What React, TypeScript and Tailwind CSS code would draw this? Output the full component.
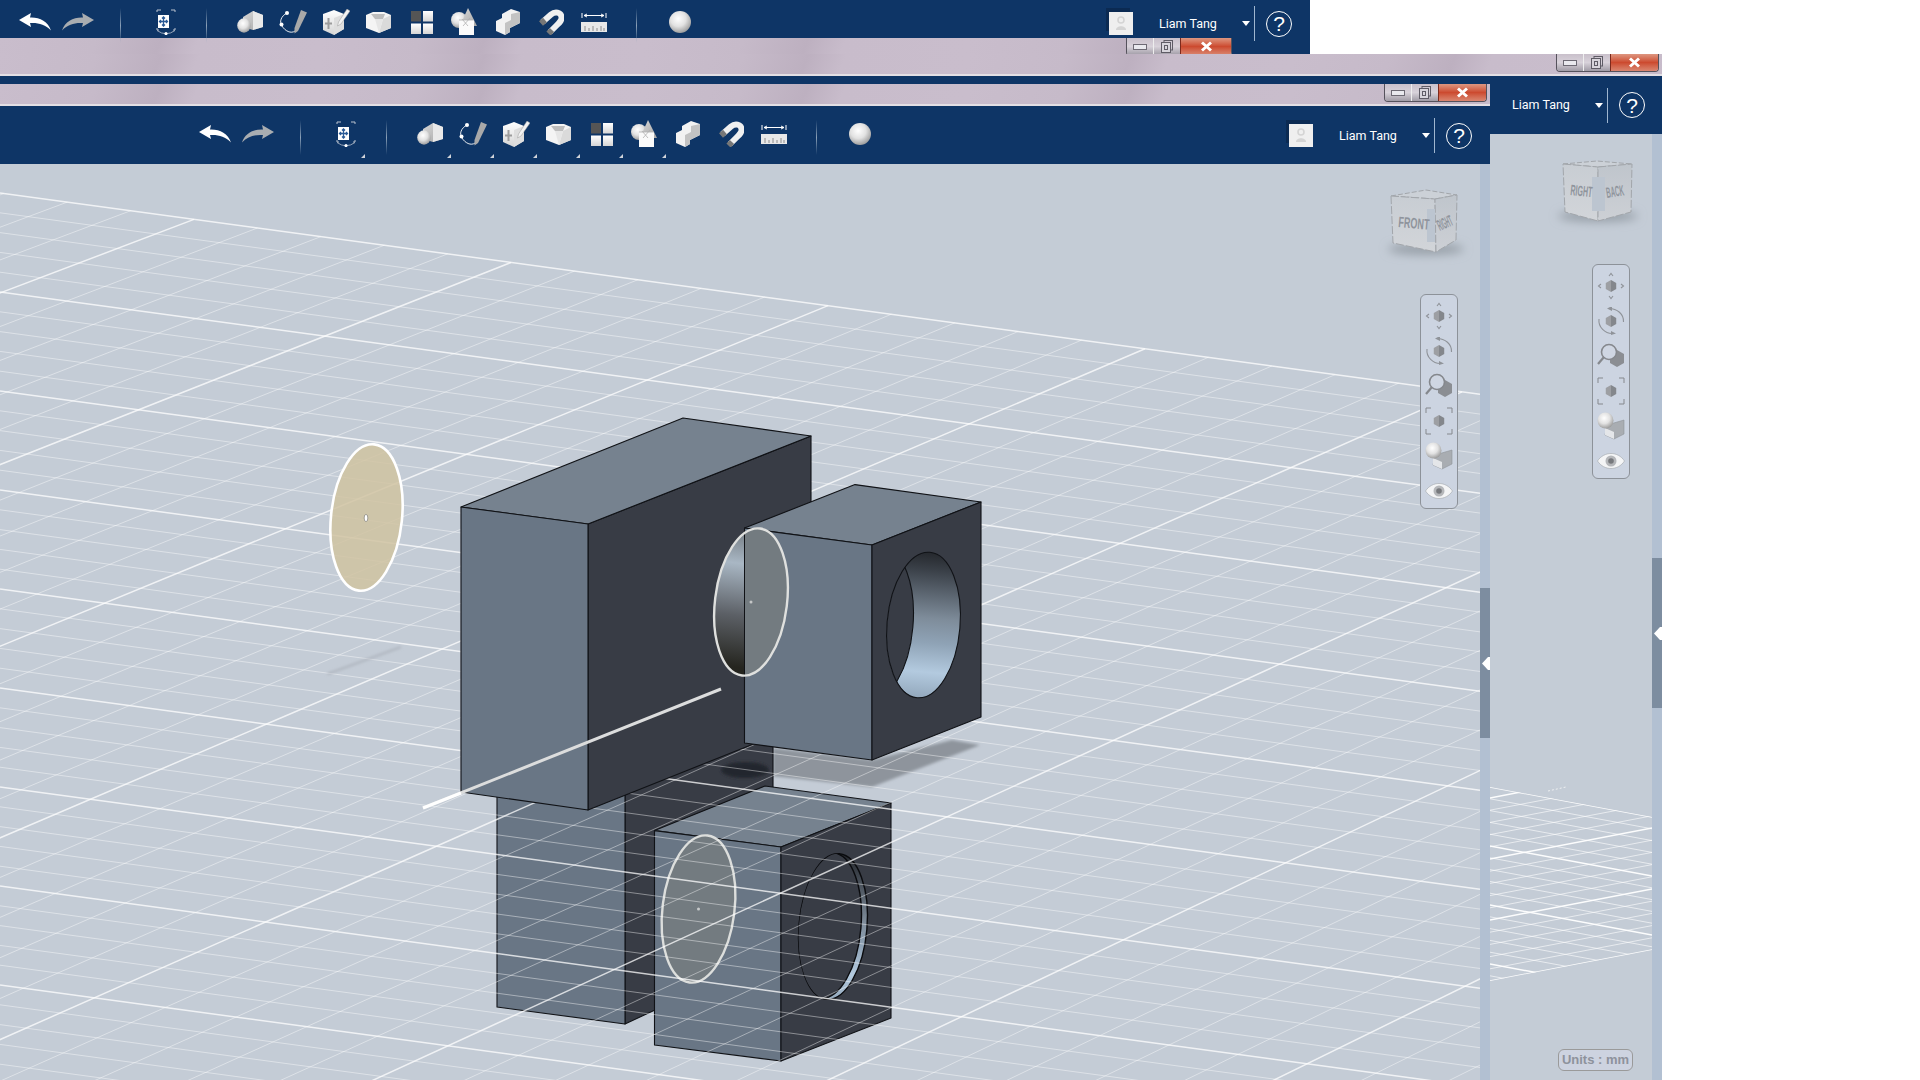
import React from 'react';

const navy = 'bg-[#0e3566]';
const mauve = 'bg-[repeating-linear-gradient(112deg,#c9bdcc_0px,#c6bac9_90px,#bdb0c0_150px,#c8bccb_185px,#c9bdcc_300px)]';

// ground grid, two families of lines running across the floor
const mainAcross = Array.from({ length: 52 }, (_, k) => {
  const y0 = 193 + 19.8 * k;
  return { key: k, x1: 0, y1: y0, x2: 1480, y2: y0 + 1480 * 0.136, major: k % 5 === 0 };
});
const mainDeep = Array.from({ length: 60 }, (_, j) => {
  const x0 = 194 + 63.4 * (j - 5);
  const y0 = 193 + 0.136 * x0;
  const s = 0.37 + 0.00005 * x0;
  return { key: j, x1: x0, y1: y0, x2: x0 - 3000, y2: y0 + 3000 * s, major: j % 5 === 0 };
});
const sideAcross = Array.from({ length: 20 }, (_, k) => {
  const y0 = 787 + 11.8 * k;
  return { key: k, x1: 1490, y1: y0, x2: 1652, y2: y0 + 30, major: k % 5 === 0 };
});
const sideDeep = Array.from({ length: 20 }, (_, j) => {
  const y0 = 981 - 12.2 * j;
  return { key: j, x1: 1490, y1: y0, x2: 1652, y2: y0 - 31, major: j % 5 === 0 };
});

type GridLine = { key: number; x1: number; y1: number; x2: number; y2: number; major: boolean };

function GridLines({ lines, minor = 0.42, major = 0.75 }: { lines: GridLine[]; minor?: number; major?: number }) {
  return (
    <>
      {lines.map(l => (
        <line key={l.key} x1={l.x1} y1={l.y1} x2={l.x2} y2={l.y2} stroke="#fff" strokeOpacity={l.major ? major : minor} strokeWidth={l.major ? 1.5 : 1} />
      ))}
    </>
  );
}

function SharedDefs() {
  return (
    <svg className="absolute w-0 h-0">
      <defs>
        <linearGradient id="whiteFace" x1="0" y1="0" x2="0" y2="1">
          <stop offset="0" stopColor="#ffffff" />
          <stop offset="1" stopColor="#d5d5d5" />
        </linearGradient>
        <linearGradient id="greyFace" x1="0" y1="0" x2="1" y2="1">
          <stop offset="0" stopColor="#d9d9d9" />
          <stop offset="1" stopColor="#a5a5a5" />
        </linearGradient>
        <radialGradient id="ball" cx="0.42" cy="0.35" r="0.7">
          <stop offset="0" stopColor="#ffffff" />
          <stop offset="0.5" stopColor="#e2e2e2" />
          <stop offset="1" stopColor="#949494" />
        </radialGradient>
        <linearGradient id="holeWall" x1="0" y1="0" x2="0" y2="1">
          <stop offset="0" stopColor="#25282d" />
          <stop offset="0.12" stopColor="#3a4048" />
          <stop offset="0.45" stopColor="#7e8c9a" />
          <stop offset="0.62" stopColor="#8fa3b6" />
          <stop offset="0.82" stopColor="#b3cadf" />
          <stop offset="1" stopColor="#93a8bc" />
        </linearGradient>
        <linearGradient id="sectionWall" x1="0" y1="0" x2="0" y2="1">
          <stop offset="0" stopColor="#6f767c" />
          <stop offset="0.25" stopColor="#a9b7c4" />
          <stop offset="0.6" stopColor="#5c6066" />
          <stop offset="0.95" stopColor="#25251f" />
        </linearGradient>
        <linearGradient id="cubeLeft" x1="0" y1="0" x2="0" y2="1">
          <stop offset="0" stopColor="#c8cdd3" />
          <stop offset="1" stopColor="#d2d5d9" />
        </linearGradient>
        <linearGradient id="cubeRight" x1="0" y1="0" x2="0" y2="1">
          <stop offset="0" stopColor="#bfc5cc" />
          <stop offset="1" stopColor="#cdd0d5" />
        </linearGradient>
        <filter id="soft" x="-30%" y="-80%" width="160%" height="260%">
          <feGaussianBlur stdDeviation="5" />
        </filter>
        <filter id="softer" x="-10%" y="-20%" width="120%" height="140%">
          <feGaussianBlur stdDeviation="1.5" />
        </filter>
        <clipPath id="holeClip"><ellipse cx="923.5" cy="625" rx="36.5" ry="73" transform="rotate(5 923.5 625)" /></clipPath>
        <clipPath id="reflHoleClip"><ellipse cx="833" cy="926.5" rx="34" ry="73" transform="rotate(5 833 926.5)" /></clipPath>
        <clipPath id="sectionLeft"><rect x="700" y="500" width="44.5" height="200" /></clipPath>
        <clipPath id="sideFloor"><polygon points="1490,787 1652,817 1652,950 1490,981" /></clipPath>
      </defs>
    </svg>
  );
}

const icons: React.ReactNode[] = [
  // undo
  <svg key="undo" width="32" height="18" viewBox="0 0 32 18" className="mt-[5px]"><path d="M0 7 L12 0 L11 4.5 C20 4 29 8 32 17.5 C26 11 19 9.5 11 10 L12 14 Z" fill="#fff" /></svg>,
  // redo
  <svg key="redo" width="32" height="18" viewBox="0 0 32 18" className="mt-[5px]"><path d="M32 7 L20 0 L21 4.5 C12 4 3 8 0 17.5 C6 11 13 9.5 21 10 L20 14 Z" fill="#a9adb1" /></svg>,
  null,
  // select / move
  <svg key="select" width="20" height="26" viewBox="0 0 20 26" className="mt-px ml-[4px]">
    <path d="M1 3 V1 H5 M15 1 H19 V3 M1 19 V21 H3 M17 21 H19 V19" fill="none" stroke="#b9c2cd" strokeWidth="1" />
    <rect x="2" y="6" width="11" height="13" fill="#fff" />
    <path d="M7.5 8 V17 M3.5 12.5 H11.5 M6 9.5 L7.5 8 L9 9.5 M6 15.5 L7.5 17 L9 15.5 M5 11 L3.5 12.5 L5 14 M10 11 L11.5 12.5 L10 14" fill="none" stroke="#2a5a96" strokeWidth="1.3" />
    <path d="M1 21.5 Q10 28 19 21.5" fill="none" stroke="#b9c2cd" strokeWidth="0.8" />
    <circle cx="10" cy="24.6" r="1.6" fill="#fff" />
  </svg>,
  null,
  // primitive: block and ball
  <svg key="prim" width="26" height="22" viewBox="0 0 26 22" className="mt-[3px]">
    <polygon points="6,6 16,0 26,4 26,16 16,19 6,16" fill="url(#greyFace)" />
    <polygon points="16,0 26,4 26,16 16,19" fill="#e9e9e9" />
    <ellipse cx="7" cy="14.5" rx="6.8" ry="7.2" fill="url(#ball)" />
  </svg>,
  // sketch: curve and pencil
  <svg key="sketch" width="28" height="24" viewBox="0 0 28 24" className="mt-[2px]">
    <path d="M8 3 C2 6 0 12 3 16 C6 21 12 24 16 21" fill="none" stroke="#fff" strokeWidth="0.9" />
    <circle cx="8" cy="3" r="2" fill="#fff" />
    <circle cx="2.5" cy="14.5" r="2" fill="#fff" />
    <polygon points="22,0 28,2.5 19,21 15.5,23.5 15.5,18" fill="#a9a9a9" />
  </svg>,
  // cube with pencil
  <svg key="edit" width="28" height="26" viewBox="0 0 28 26" className="mt-px">
    <polygon points="1,5 12,1 22,5 22,20 12,26 1,21" fill="url(#whiteFace)" />
    <polygon points="12,9 22,5 22,20 12,26" fill="#dedede" />
    <path d="M6.5 9 V20 M3 14.5 H10" stroke="#9c9c9c" strokeWidth="2" />
    <polygon points="25,0 28,2 19,15 15.5,17 16.5,13" fill="#f2f2f2" stroke="#9a9a9a" strokeWidth="0.5" />
  </svg>,
  // hollow cube
  <svg key="hollow" width="25" height="22" viewBox="0 0 25 22" className="mt-[3px]">
    <polygon points="0,4 7,1 18,1 25,4 25,17 13,22 0,17" fill="#f4f4f4" />
    <polygon points="13,22 25,17 25,4 17,8" fill="#dadada" />
    <polygon points="5,3 19,3 17,8 9,8" fill="#bdbdbd" />
    <polygon points="9,8 13,22 17,8" fill="#e6e6e6" />
  </svg>,
  // pattern grid
  <svg key="pattern" width="22" height="23" viewBox="0 0 22 23" className="mt-[3px]">
    <rect x="0" y="0" width="10" height="10.5" fill="#555" />
    <rect x="12" y="0" width="10" height="10.5" fill="url(#whiteFace)" />
    <rect x="0" y="12.5" width="10" height="10.5" fill="url(#whiteFace)" />
    <rect x="12" y="12.5" width="10" height="10.5" fill="url(#whiteFace)" />
  </svg>,
  // boolean shapes
  <svg key="shapes" width="27" height="27" viewBox="0 0 27 27" className="mt-0">
    <circle cx="8" cy="12" r="8" fill="url(#ball)" />
    <polygon points="17,0 26,18 9,18" fill="url(#greyFace)" />
    <rect x="8" y="12" width="15" height="15" fill="#fafafa" />
    <path d="M8 12 H23 M12 18 L19 10 M11 11 L17 18" fill="none" stroke="#b0b0b0" strokeWidth="0.8" />
  </svg>,
  // stepped block
  <svg key="block" width="24" height="26" viewBox="0 0 24 26" className="mt-px">
    <polygon points="0,12 6,9 6,5 15,0 24,3 24,14 14,19 14,23 9,26 0,22" fill="#f2f2f2" />
    <polygon points="15,5 24,3 24,14 14,19 14,23 9,26 9,14 15,11" fill="#c3c3c3" />
  </svg>,
  // magnet
  <svg key="magnet" width="26" height="26" viewBox="0 0 26 26" className="mt-px">
    <path d="M4.5 13 L13 5.5 C17 2 23 3 23.5 8 C24 11 22 13 19 16 L12 23" fill="none" stroke="#f0f0f0" strokeWidth="6" />
    <path d="M3 14.5 L7 11 M10.5 24.5 L14 21" fill="none" stroke="#777" strokeWidth="6" />
  </svg>,
  // measure
  <svg key="measure" width="26" height="19" viewBox="0 0 26 19" className="mt-[5px]">
    <path d="M1 0 V5 M25 0 V5 M3 2.5 H23 M3 2.5 L6 1 M3 2.5 L6 4 M23 2.5 L20 1 M23 2.5 L20 4" fill="none" stroke="#fff" strokeWidth="1" />
    <rect x="0" y="9" width="26" height="10" fill="#e8e8e8" />
    <path d="M4 13 V18 M8 15 V18 M12 13 V18 M16 15 V18 M20 13 V18 M23 15 V18" stroke="#777" strokeWidth="0.8" />
  </svg>,
  null,
  // material ball
  <svg key="ball" width="22" height="22" viewBox="0 0 22 22" className="mt-[3px]"><circle cx="11" cy="11" r="11" fill="url(#ball)" /></svg>,
];

function Divider() {
  return <div className="w-px h-[35px] bg-gradient-to-b from-transparent via-[#8aa0b8] to-transparent" />;
}

const notched = [3, 5, 6, 7, 8, 9, 10];

function ToolIcons({ notches }: { notches?: boolean }) {
  return (
    <div className="flex items-start">
      {icons.map((icon, i) => (
        <div key={i} className="relative w-[43px] h-[28px] flex justify-center">
          {icon ?? <Divider />}
          {notches && notched.includes(i) && (
            <svg width="4" height="4" viewBox="0 0 4 4" className="absolute right-0 top-[34px]"><polygon points="4,0 4,4 0,4" fill="#d0d4da" /></svg>
          )}
        </div>
      ))}
    </div>
  );
}

function UserBox({ avatar }: { avatar?: boolean }) {
  return (
    <div className="flex items-center h-[35px]">
      {avatar && (
        <div className="w-[24px] h-[23px] mr-[26px] bg-[#efefef] flex items-center justify-center shadow-[-3px_-4px_0_#0b2a52]">
          <svg width="12" height="15" viewBox="0 0 12 15"><circle cx="6" cy="4" r="3" fill="none" stroke="#d4d4d4" strokeWidth="1.6" /><path d="M1 14 C1 9 11 9 11 14 Z" fill="#d4d4d4" /></svg>
        </div>
      )}
      <span className="w-[83px] pt-px text-[12.5px] text-white font-['Roboto',sans-serif]">Liam Tang</span>
      <svg width="8" height="5" viewBox="0 0 8 5"><polygon points="0,0 8,0 4,5" fill="#fff" /></svg>
      <div className="w-px h-[35px] ml-[4px] bg-[#9fb6d0]" />
      <div className="ml-[11px] w-[26px] h-[26px] rounded-full border border-white flex items-center justify-center text-white text-[21px] leading-none font-['Liberation_Sans',sans-serif]">?</div>
    </div>
  );
}

function WinControls({ className }: { className: string }) {
  return (
    <div className={`flex rounded-b-[4px] border border-t-0 border-[#55525c] overflow-hidden shrink-0 ${className}`}>
      <div className="w-[27px] border-r border-[#eee] flex items-center justify-center bg-gradient-to-b from-[#c9c0cb] via-[#d8d2da] to-[#a09ca6]">
        <div className="w-[14px] h-[6px] bg-[#e9e9ee] border border-[#6d6a74]" />
      </div>
      <div className="w-[26px] flex items-center justify-center bg-gradient-to-b from-[#c9c0cb] via-[#d8d2da] to-[#a09ca6]">
        <svg width="12" height="13" viewBox="0 0 12 13"><rect x="3" y="0.5" width="8.5" height="9.5" fill="none" stroke="#5f5c66" /><rect x="0.5" y="2.5" width="9" height="10" fill="#d8d5dc" stroke="#5f5c66" /><rect x="3.5" y="5.5" width="3" height="4" fill="none" stroke="#5f5c66" /></svg>
      </div>
      <div className="flex-1 flex items-center justify-center bg-gradient-to-b from-[#dd9680] via-[#cc4a2f] to-[#d98670] border-l border-[#7d2a1c]">
        <svg width="13" height="11" viewBox="0 0 13 11"><path d="M2 1.5 L11 9.5 M11 1.5 L2 9.5" stroke="#fff" strokeWidth="3" /></svg>
      </div>
    </div>
  );
}

function Hex({ cx, cy, r }: { cx: number; cy: number; r: number }) {
  const h = r * 0.87;
  return (
    <>
      <polygon points={`${cx},${cy - r} ${cx - h},${cy - r / 2} ${cx - h},${cy + r / 2} ${cx},${cy + r}`} fill="#9d9fa3" />
      <polygon points={`${cx},${cy - r} ${cx + h},${cy - r / 2} ${cx + h},${cy + r / 2} ${cx},${cy + r}`} fill="#84878c" />
    </>
  );
}

const navIcons: React.ReactNode[] = [
  <svg key="pan" width="28" height="28" viewBox="0 0 28 28">
    <Hex cx={14} cy={14} r={6} />
    <path d="M12 4 L14 1.5 L16 4 M12 24 L14 26.5 L16 24 M4 12 L1.5 14 L4 16 M24 12 L26.5 14 L24 16" fill="none" stroke="#8f9399" strokeWidth="1.1" />
  </svg>,
  <svg key="orbit" width="28" height="28" viewBox="0 0 28 28">
    <Hex cx={14} cy={14} r={6} />
    <path d="M12 1.5 C20 1.5 27 7 26.5 15 M2 12 C1 20 8 27 16 26.5" fill="none" stroke="#8f9399" strokeWidth="1.1" />
    <path d="M15 -1 L10 1.5 L15 4 M14 24 L19 26.5 L14 28" fill="#8f9399" />
  </svg>,
  <svg key="zoom" width="28" height="28" viewBox="0 0 28 28">
    <polygon points="20,8 27,12 27,21 20,25 13,21 13,12" fill="#8b8e93" />
    <circle cx="12" cy="10" r="7.5" fill="#cfd6e2" stroke="#85888d" strokeWidth="1.6" />
    <path d="M7 15 L1 22" stroke="#85888d" strokeWidth="2.2" />
  </svg>,
  <svg key="fit" width="28" height="28" viewBox="0 0 28 28">
    <Hex cx={14} cy={14} r={6} />
    <path d="M1 6 V1 H6 M22 1 H27 V6 M1 22 V27 H6 M22 27 H27 V22" fill="none" stroke="#85888d" strokeWidth="1" />
  </svg>,
  <svg key="view" width="28" height="28" viewBox="0 0 28 28">
    <polygon points="10,13 27,8 27,22 17,27 8,23" fill="#a9adb2" stroke="#8f9399" strokeWidth="0.6" />
    <polygon points="8,16 17,20 17,27 8,23" fill="#e4e6e9" />
    <circle cx="8.5" cy="8.5" r="8" fill="url(#ball)" />
  </svg>,
  <svg key="eye" width="28" height="18" viewBox="0 0 28 18">
    <path d="M0.5 9 C7 -1 21 -1 27.5 9 C21 19 7 19 0.5 9 Z" fill="#f4f5f6" stroke="#a0a4aa" strokeWidth="0.6" />
    <circle cx="14" cy="9" r="5.5" fill="#b5b7ba" />
    <circle cx="14" cy="9" r="2.8" fill="#77797d" />
  </svg>,
];

function NavPanel({ className }: { className: string }) {
  return (
    <div className={`absolute w-[38px] h-[215px] pt-[3px] rounded-md border-[1.5px] border-[#8d9299] bg-[#ccd4e1] flex flex-col ${className}`}>
      {navIcons.map((icon, i) => (
        <div key={i} className="h-[35px] shrink-0 flex items-center justify-center">{icon}</div>
      ))}
    </div>
  );
}

type CubeProps = {
  top: string;
  left: string;
  right: string;
  leftLabel: string;
  rightLabel: string;
  leftAt: string;
  rightAt: string;
  shadow: [number, number, number];
  strip: [number, number, number, number];
};

function NavCube(p: CubeProps) {
  return (
    <g>
      <ellipse cx={p.shadow[0]} cy={p.shadow[1]} rx={p.shadow[2]} ry={6} fill="#98a0a9" filter="url(#soft)" />
      <polygon points={p.top} fill="#ccd1d7" stroke="#a2a6ab" strokeDasharray="5 2" />
      <polygon points={p.left} fill="url(#cubeLeft)" stroke="#a2a6ab" strokeDasharray="8 2" />
      <polygon points={p.right} fill="url(#cubeRight)" stroke="#a2a6ab" strokeDasharray="8 2" />
      <rect x={p.strip[0]} y={p.strip[1]} width={p.strip[2]} height={p.strip[3]} fill="#bcc5d0" />
      <text transform={p.leftAt} fontFamily="Liberation Sans, sans-serif" fontSize={15} fontWeight="bold" fill="#8f949c">{p.leftLabel}</text>
      <text transform={p.rightAt} fontFamily="Liberation Sans, sans-serif" fontSize={15} fontWeight="bold" fill="#8f949c">{p.rightLabel}</text>
    </g>
  );
}

function Edge({ points, fill }: { points: string; fill: string }) {
  return <polygon points={points} fill={fill} stroke="#101216" strokeWidth="1.1" strokeLinejoin="round" />;
}

function Scene() {
  const top = '#76828f';
  const front = '#697685';
  const dark = '#383c45';
  return (
    <svg className="absolute inset-0 w-[1480px] h-[916px]" viewBox="0 164 1480 916">
      {/* ground shadow */}
      <polygon points="773,748 872,760 952,740 980,745 872,787 773,776" fill="#8e949c" filter="url(#softer)" />

      {/* reflection under the floor */}
      <Edge points="625,795 773,721 773,790 655,1010 625,1024" fill={dark} />
      <Edge points="497,780 625,795 625,1024 497,1007" fill={front} />
      <ellipse cx="745" cy="770" rx="24" ry="8" fill="#24282e" filter="url(#softer)" />
      <Edge points="654.5,830.6 765,786 891,803 781,847" fill={top} />
      <Edge points="654.5,830.6 781,847 781,1061 654.5,1045" fill={front} />
      <Edge points="781,847 891,803 891,1018 781,1061" fill={dark} />
      <ellipse cx="833" cy="926.5" rx="34" ry="73" transform="rotate(5 833 926.5)" fill="url(#holeWall)" stroke="#0a0b0e" strokeWidth="1.4" />
      <g clipPath="url(#reflHoleClip)">
        <ellipse cx="827" cy="925.5" rx="34" ry="73" transform="rotate(5 827 925.5)" fill={dark} stroke="#0a0b0e" strokeWidth="1.4" />
      </g>
      <ellipse cx="698.5" cy="909" rx="36" ry="74" transform="rotate(7 698.5 909)" fill="#737b80" stroke="#dcdedc" strokeWidth="2.4" />
      <circle cx="698.5" cy="909" r="1.5" fill="#c9cbcb" />

      {/* floor */}
      <GridLines lines={mainDeep} />
      <GridLines lines={mainAcross} />

      {/* sketch plane shadow */}
      <line x1="327.5" y1="674" x2="401" y2="647" stroke="#a6acb5" strokeWidth="1.5" filter="url(#softer)" />

      {/* floating section */}
      <ellipse cx="366.5" cy="517.5" rx="35.5" ry="73.5" transform="rotate(6 366.5 517.5)" fill="#d0c3a1" fillOpacity="0.85" stroke="#fff" strokeWidth="2.6" />
      <ellipse cx="366" cy="518" rx="1.8" ry="3.6" fill="#fff" stroke="#555" strokeWidth="0.5" />

      {/* big block */}
      <Edge points="588,524 811,436 811,721 588,810" fill={dark} />
      <Edge points="461,507 683,418 811,436 588,524" fill={top} />
      <Edge points="461,507 588,524 588,810 461,792" fill={front} />

      {/* small block */}
      <Edge points="744.5,528 855,484.6 981,502 872,545" fill={top} />
      <Edge points="744.5,528 872,545 872,760 744.5,743" fill={front} />
      <Edge points="872,545 981,502 981,717 872,760" fill={dark} />
      <ellipse cx="923.5" cy="625" rx="36.5" ry="73" transform="rotate(5 923.5 625)" fill="url(#holeWall)" />
      <g clipPath="url(#holeClip)">
        <ellipse cx="876" cy="624" rx="37" ry="77" transform="rotate(5 876 624)" fill={dark} stroke="#101216" strokeWidth="1.1" />
      </g>
      <ellipse cx="923.5" cy="625" rx="36.5" ry="73" transform="rotate(5 923.5 625)" fill="none" stroke="#101216" strokeWidth="1.1" />

      {/* section through the blocks */}
      <ellipse cx="751" cy="602" rx="36" ry="74" transform="rotate(7 751 602)" fill="#737b80" />
      <g clipPath="url(#sectionLeft)">
        <ellipse cx="751" cy="602" rx="36" ry="74" transform="rotate(7 751 602)" fill="url(#sectionWall)" />
      </g>
      <line x1="744.5" y1="528" x2="744.5" y2="676" stroke="#101216" strokeWidth="1" />
      <ellipse cx="751" cy="602" rx="36" ry="74" transform="rotate(7 751 602)" fill="none" stroke="#dfe0de" strokeWidth="2.4" />
      <circle cx="751" cy="602" r="1.5" fill="#c4c6c6" />

      {/* axis */}
      <line x1="423" y1="808" x2="721" y2="689" stroke="#dcdddd" strokeWidth="3" />
      <line x1="423" y1="808" x2="461" y2="793" stroke="#fff" strokeWidth="3" />

      <NavCube
        top="1391,196 1426,190 1457,195 1435,199"
        left="1391,196 1435,199 1436,252 1393,243"
        right="1435,199 1457,195 1456,240 1436,252"
        leftLabel="FRONT"
        rightLabel="RIGHT"
        leftAt="translate(1398 227) rotate(5) scale(0.6 1)"
        rightAt="translate(1440 231) rotate(-24) scale(0.33 1.05)"
        shadow={[1426, 249, 38]}
        strip={[1427, 209, 8, 33]}
      />
    </svg>
  );
}

function SidePanelArt() {
  return (
    <svg className="absolute inset-0 w-[162px] h-[946px]" viewBox="1490 134 162 946">
      <g clipPath="url(#sideFloor)">
        <GridLines lines={sideAcross} minor={0.6} major={0.95} />
        <GridLines lines={sideDeep} minor={0.6} major={0.95} />
      </g>
      <line x1="1548" y1="791" x2="1566" y2="787" stroke="#eef0f2" strokeWidth="1" strokeDasharray="2 2" />
      <NavCube
        top="1563,164 1597,161 1632,164 1598,167"
        left="1563,164 1598,167 1598,221 1565,212"
        right="1598,167 1632,164 1631,212 1598,221"
        leftLabel="RIGHT"
        rightLabel="BACK"
        leftAt="translate(1570 195) rotate(6) scale(0.47 1)"
        rightAt="translate(1607 198) rotate(-9) scale(0.41 1)"
        shadow={[1598, 216, 40]}
        strip={[1592, 177, 13, 34]}
      />
    </svg>
  );
}

function ScrollStrip() {
  return (
    <div className="w-[10px] shrink-0 bg-[#b2c0d2]">
      <div className="relative mt-[424px] h-[150px] bg-[#7d8da0]">
        <svg width="8" height="13" viewBox="0 0 8 13" className="absolute right-0 top-[69px]"><polygon points="0,6.5 6,0 8,0 8,13 6,13" fill="#fff" /></svg>
      </div>
    </div>
  );
}

export default function App() {
  return (
    <div className="relative w-[1920px] h-[1080px] bg-white overflow-hidden flex flex-col font-['Liberation_Sans',sans-serif]">
      <SharedDefs />

      {/* window at the back */}
      <div className={`w-[1310px] h-[54px] shrink-0 ${navy}`}>
        <div className="h-[38px] flex items-start justify-between pl-[13px] pr-[18px] pt-[8px]">
          <ToolIcons />
          <div className="-mt-[2px]"><UserBox avatar /></div>
        </div>
        <div className={`w-[1232px] h-[16px] flex justify-end ${mauve}`}>
          <WinControls className="w-[106px] h-[18px]" />
        </div>
      </div>

      {/* second window */}
      <div className="w-[1662px] flex-1 min-h-0 flex flex-col">
        <div className={`h-[20px] shrink-0 flex justify-end pr-[3px] ${mauve}`}>
          <WinControls className="w-[103px] h-[18px]" />
        </div>
        <div className="h-[2px] shrink-0 bg-[#e3dfe4]" />
        <div className="flex-1 min-h-0 flex">
          {/* front window */}
          <div className="w-[1490px] shrink-0 flex flex-col">
            <div className={`h-[8px] shrink-0 ${navy}`} />
            <div className={`h-[20px] shrink-0 flex justify-end pr-[3px] ${mauve}`}>
              <WinControls className="w-[103px] h-[18px]" />
            </div>
            <div className="h-[2px] shrink-0 bg-[#e3dfe4]" />
            <div className={`h-[58px] shrink-0 flex items-start justify-between pl-[193px] pr-[18px] pt-[14px] ${navy}`}>
              <ToolIcons notches />
              <div className="-mt-[2px]"><UserBox avatar /></div>
            </div>
            <div className="flex-1 min-h-0 flex">
              <div className="relative flex-1 bg-[#c4ccd6] overflow-hidden">
                <Scene />
                <NavPanel className="left-[1420px] top-[130px]" />
              </div>
              <ScrollStrip />
            </div>
          </div>

          {/* rest of the second window */}
          <div className="flex-1 flex flex-col">
            <div className={`h-[58px] shrink-0 flex items-center pl-[22px] ${navy}`}>
              <UserBox />
            </div>
            <div className="flex-1 min-h-0 flex">
              <div className="relative flex-1 bg-[#c4ccd6] overflow-hidden">
                <SidePanelArt />
                <NavPanel className="left-[102px] top-[130px]" />
                <div className="absolute right-[19px] bottom-[9px] w-[75px] h-[22px] rounded-md border border-[#9a9a9a] bg-[#cdd3e0] flex items-center justify-center text-[13px] font-bold text-[#8e929c]">Units : mm</div>
              </div>
              <ScrollStrip />
            </div>
          </div>
        </div>
      </div>
    </div>
  );
}
